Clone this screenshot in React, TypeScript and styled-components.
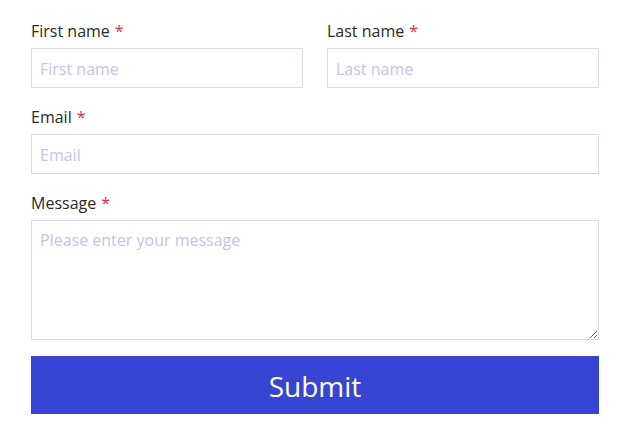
import React from "react";
import styled, { createGlobalStyle } from "styled-components";

const Global = createGlobalStyle`
  html, body { margin: 0; padding: 0; background: #ffffff; }
  body { font-family: "Open Sans", "Noto Sans", sans-serif; }
  * { box-sizing: border-box; }
`;

const Form = styled.form`
  display: flex;
  flex-direction: column;
  gap: 16px;
  padding: 18px 26px 0 31px;
  width: 625px;
`;

const Row = styled.div`
  display: grid;
  grid-template-columns: 1fr 1fr;
  column-gap: 24px;
`;

const Field = styled.div`
  display: flex;
  flex-direction: column;
  gap: 5px;
`;

const Label = styled.label`
  font-size: 16px;
  line-height: 24px;
  padding-top: 1px;
  color: #2a2a2a;
`;

const Star = styled.span`
  color: #e0313f;
  margin-left: 5px;
`;

const Input = styled.input`
  height: 40px;
  width: 100%;
  border: 1px solid #dcdae3;
  border-radius: 0;
  padding: 2px 8px 0;
  font-family: inherit;
  font-size: 16px;
  color: #333;
  outline: none;
  &::placeholder { color: #c6c3e6; }
`;

const TextArea = styled.textarea`
  height: 120px;
  width: 100%;
  border: 1px solid #dcdae3;
  border-radius: 0;
  padding: 8px 8px;
  font-family: inherit;
  font-size: 16px;
  line-height: 22px;
  color: #333;
  outline: none;
  resize: both;
  display: block;
  &::placeholder { color: #c6c3e6; }
`;

const Button = styled.button`
  height: 58px;
  width: 100%;
  border: none;
  padding: 2px 0 0;
  background: #3645d3;
  color: #ffffff;
  font-family: inherit;
  font-size: 28px;
  cursor: pointer;
`;

const Req = ({ children }: { children: React.ReactNode }) => (
  <Label>
    {children}
    <Star>*</Star>
  </Label>
);

export default function App() {
  return (
    <>
      <Global />
      <Form onSubmit={(e) => e.preventDefault()}>
        <Row>
          <Field>
            <Req>First name</Req>
            <Input placeholder="First name" />
          </Field>
          <Field>
            <Req>Last name</Req>
            <Input placeholder="Last name" />
          </Field>
        </Row>
        <Field>
          <Req>Email</Req>
          <Input placeholder="Email" />
        </Field>
        <Field>
          <Req>Message</Req>
          <TextArea placeholder="Please enter your message" />
        </Field>
        <Button type="submit">Submit</Button>
      </Form>
    </>
  );
}
